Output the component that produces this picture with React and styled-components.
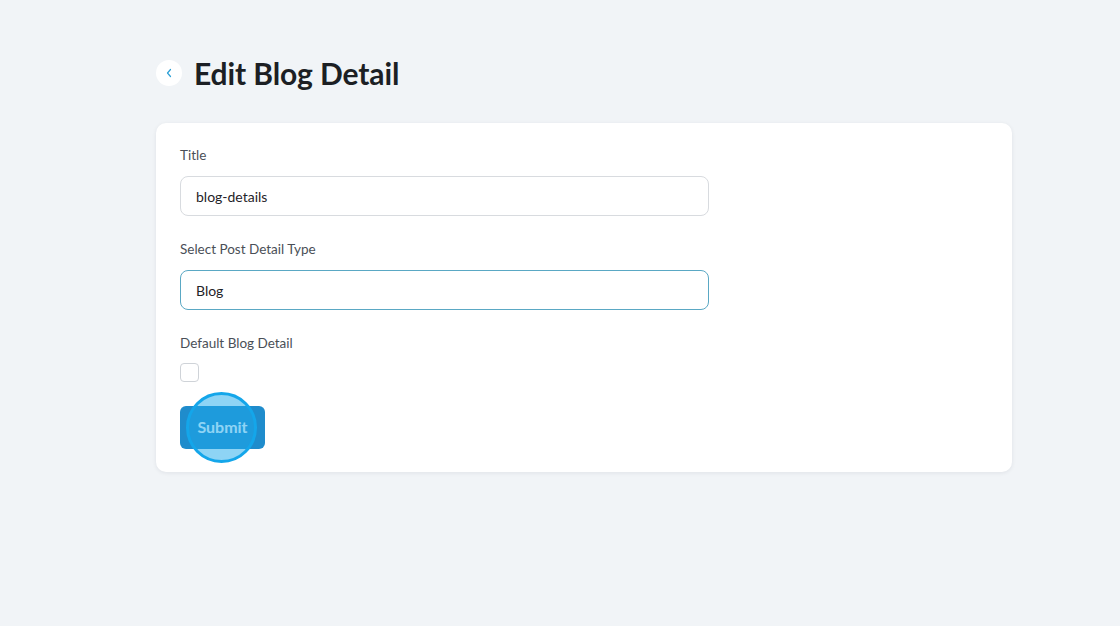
import React from 'react';
import styled, { createGlobalStyle } from 'styled-components';

const GlobalStyle = createGlobalStyle`
  html, body {
    margin: 0;
    padding: 0;
    background: #f1f4f7;
    font-family: Lato, "Open Sans", Arial, sans-serif;
  }
`;

const Page = styled.div`
  min-height: 626px;
  padding: 55px 0 0 156px;
  box-sizing: border-box;
`;

const Wrap = styled.div`
  width: 856px;
`;

const Header = styled.div`
  display: flex;
  align-items: center;
  gap: 12px;
  height: 36px;
  margin-bottom: 32px;
`;

const BackButton = styled.button`
  width: 26px;
  height: 26px;
  border-radius: 50%;
  border: none;
  background: #ffffff;
  display: flex;
  align-items: center;
  justify-content: center;
  padding: 0;
  cursor: pointer;
`;

const Heading = styled.h1`
  margin: 0;
  font-size: 30px;
  line-height: 36px;
  font-weight: 700;
  color: #1c1f24;
  letter-spacing: -0.1px;
`;

const Card = styled.div`
  background: #ffffff;
  border-radius: 10px;
  box-shadow: 0 1px 4px rgba(20, 30, 50, 0.08);
  padding: 23px 24px 23px;
  display: flex;
  flex-direction: column;
`;

const Field = styled.div`
  display: flex;
  flex-direction: column;
  gap: 12px;
  margin-bottom: 24px;
`;

const Label = styled.label`
  font-size: 13.5px;
  line-height: 18px;
  color: #4a4f57;
`;

const Input = styled.div`
  width: 529px;
  height: 40px;
  box-sizing: border-box;
  border: 1px solid ${(p) => (p.$active ? '#5aa8c4' : '#d8dbdf')};
  border-radius: 8px;
  padding: 0 15px;
  display: flex;
  align-items: center;
  font-size: 14px;
  color: #1f2328;
`;

const Checkbox = styled.div`
  width: 19px;
  height: 19px;
  box-sizing: border-box;
  border: 1px solid #cfd3d8;
  border-radius: 4px;
  background: #fff;
`;

const CheckField = styled(Field)`
  gap: 11px;
`;

const ButtonRow = styled.div`
  position: relative;
  align-self: flex-start;
`;

const SubmitButton = styled.button`
  width: 85px;
  height: 43px;
  border: none;
  border-radius: 6px;
  background: #1f8ccc;
  color: #ffffff;
  font-family: inherit;
  font-size: 16px;
  font-weight: 700;
  padding: 0 0 2px;
  cursor: pointer;
`;

const ClickRing = styled.span`
  position: absolute;
  left: 6px;
  top: -14px;
  width: 71px;
  height: 71px;
  box-sizing: border-box;
  border-radius: 50%;
  border: 3px solid #14a6ea;
  background: rgba(30, 170, 235, 0.5);
  pointer-events: none;
`;

export default function App() {
  return (
    <>
      <GlobalStyle />
      <Page>
        <Wrap>
          <Header>
            <BackButton aria-label="Back">
              <svg width="8" height="10" viewBox="0 0 8 10" fill="none">
                <path d="M5.5 1.5 L2.5 5 L5.5 8.5" stroke="#2a9fd6" strokeWidth="1.2" strokeLinecap="round" strokeLinejoin="round" />
              </svg>
            </BackButton>
            <Heading>Edit Blog Detail</Heading>
          </Header>
          <Card>
            <Field>
              <Label>Title</Label>
              <Input>blog-details</Input>
            </Field>
            <Field>
              <Label>Select Post Detail Type</Label>
              <Input $active>Blog</Input>
            </Field>
            <CheckField>
              <Label>Default Blog Detail</Label>
              <Checkbox />
            </CheckField>
            <ButtonRow>
              <SubmitButton>Submit</SubmitButton>
              <ClickRing />
            </ButtonRow>
          </Card>
        </Wrap>
      </Page>
    </>
  );
}
